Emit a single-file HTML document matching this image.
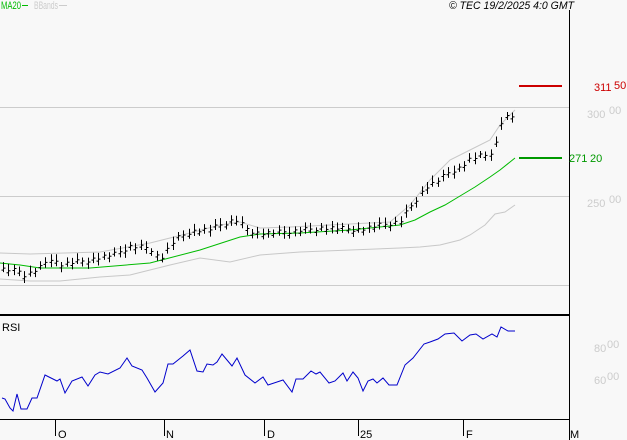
<!DOCTYPE html>
<html><head><style>
html,body{margin:0;padding:0;background:#f8f8f8;width:627px;height:440px;overflow:hidden}
svg{display:block}
text{font-family:"Liberation Sans",sans-serif;font-size:11px}
</style></head><body>
<svg id="s" width="627" height="440" xmlns="http://www.w3.org/2000/svg">
<rect width="627" height="440" fill="#f8f8f8"/>
<line x1="0" y1="107.5" x2="569" y2="107.5" stroke="#ccc"/>
<line x1="0" y1="196.5" x2="569" y2="196.5" stroke="#ccc"/>
<line x1="0" y1="285.5" x2="569" y2="285.5" stroke="#ccc"/>
<line x1="569.5" y1="10" x2="569.5" y2="440" stroke="#000"/>
<line x1="0" y1="315" x2="569" y2="315" stroke="#000" stroke-width="2"/>
<line x1="0" y1="419.5" x2="569" y2="419.5" stroke="#000"/>
<g stroke="#000">
<line x1="55.5" y1="419" x2="55.5" y2="436"/><line x1="164.5" y1="419" x2="164.5" y2="436"/>
<line x1="264.5" y1="419" x2="264.5" y2="436"/><line x1="358.5" y1="419" x2="358.5" y2="436"/>
<line x1="463.5" y1="419" x2="463.5" y2="436"/><line x1="569.5" y1="419" x2="569.5" y2="436"/>
</g>
<text x="58" y="438" font-size="12">O</text><text x="166" y="438" font-size="12">N</text>
<text x="267" y="438" font-size="12">D</text><text x="360" y="438" font-size="12">25</text>
<text x="466" y="438" font-size="12">F</text><text x="570" y="438" font-size="12">M</text>
<text x="1" y="9" fill="#00bb00" font-size="10" textLength="20" lengthAdjust="spacingAndGlyphs">MA20</text><line x1="22" y1="5.5" x2="28" y2="5.5" stroke="#00bb00"/>
<text x="34" y="9" fill="#ccc" font-size="10" textLength="24" lengthAdjust="spacingAndGlyphs">BBands</text><line x1="59" y1="5.5" x2="67" y2="5.5" stroke="#ccc"/>
<text x="449" y="9" font-size="10" font-style="italic" textLength="125" lengthAdjust="spacingAndGlyphs">© TEC 19/2/2025 4:0 GMT</text>
<line x1="519" y1="86" x2="562" y2="86" stroke="#cc0000" stroke-width="2"/>
<text x="594" y="91" fill="#cc0000" font-size="11">311</text><text x="614" y="89" fill="#cc0000" font-size="8">50</text>
<line x1="519" y1="158" x2="562" y2="158" stroke="#009900" stroke-width="2"/>
<text x="569" y="162" fill="#009900" font-size="11">271</text><text x="590" y="162" fill="#009900" font-size="10">20</text>
<text x="587" y="118" fill="#ccc" font-size="13">300</text><text x="609" y="114" fill="#ccc" font-size="8">00</text>
<text x="587" y="207" fill="#ccc" font-size="13">250</text><text x="609" y="203" fill="#ccc" font-size="8">00</text>
<text x="594" y="352" fill="#ccc" font-size="13">80</text><text x="607" y="348" fill="#ccc" font-size="8">00</text>
<text x="594" y="384" fill="#ccc" font-size="13">60</text><text x="607" y="380" fill="#ccc" font-size="8">00</text>
<text x="2" y="331" font-size="10">RSI</text>
<polyline fill="none" stroke="#c8c8c8" points="0,253 30,254 100,252 150,243 190,233 220,225 240,222 260,228 290,227 390,222 410,205 430,180 450,160 470,150 490,140 500,125 515,110"/>
<polyline fill="none" stroke="#c8c8c8" points="0,279 30,281 60,281 100,277 130,275 170,265 200,258 230,262 260,255 300,252 400,248 420,247 440,245 460,240 470,235 485,225 495,214 505,212 515,205"/>
<polyline fill="none" stroke="#00bb00" points="0,263 20,265 40,268 90,268 150,263 200,250 240,237 260,234 300,233 350,230 400,225 415,220 430,212 445,205 460,196 475,187 490,177 500,170 515,158"/>
<polyline fill="none" stroke="#0000cc" points="2,398 5,399 10,408 13,411 17,394 21,409 27,409 32,398 37,398 45,375 57,381 60,379 65,393 72,381 82,377 88,386 95,375 100,372 108,374 120,368 127,358 132,366 142,370 147,378 155,392 163,383 168,364 173,364 183,356 190,350 197,371 203,372 207,364 213,365 217,362 222,354 232,366 237,358 245,375 255,383 263,377 268,385 280,381 283,380 292,392 296,379 303,379 311,371 316,374 320,372 329,383 335,381 343,373 347,381 353,372 358,378 363,391 368,381 373,379 377,383 383,378 389,385 397,385 405,365 413,358 424,344 430,342 438,339 445,334 454,333 462,341 470,335 476,334 483,339 492,334 497,337 501,327 508,331 515,331"/>
<g id="bars" stroke="#000"></g>
</svg>
<script>
var pts=[[2,270],[20,272],[25,276],[40,268],[50,258],[60,265],[80,262],[100,258],[115,255],[130,247],[150,248],[160,260],[175,240],[190,232],[210,230],[235,220],[245,228],[255,233],[265,234],[290,232],[320,228],[340,229],[360,230],[380,226],[400,222],[408,210],[416,200],[425,188],[435,183],[450,172],[460,168],[470,160],[480,157],[488,156],[495,148],[500,125],[505,118],[510,118],[515,116]];
function f(x){for(var i=1;i<pts.length;i++){if(x<=pts[i][0]){var a=pts[i-1],b=pts[i];return a[1]+(b[1]-a[1])*(x-a[0])/(b[0]-a[0]);}}return 116;}
var g=document.getElementById('bars'),h='';
for(var x=3;x<=515;x+=5.3){var y=f(x)+((x*7)%5-2);var hi=y-4-(x*13)%4,lo=y+3+(x*11)%3;var X=Math.round(x)+.5;
h+='<line x1="'+X+'" y1="'+hi+'" x2="'+X+'" y2="'+lo+'"/><line x1="'+(X-2)+'" y1="'+(y+1)+'" x2="'+X+'" y2="'+(y+1)+'"/><line x1="'+X+'" y1="'+(y-1)+'" x2="'+(X+2)+'" y2="'+(y-1)+'"/>';}
g.innerHTML=h;
</script>
</body></html>
